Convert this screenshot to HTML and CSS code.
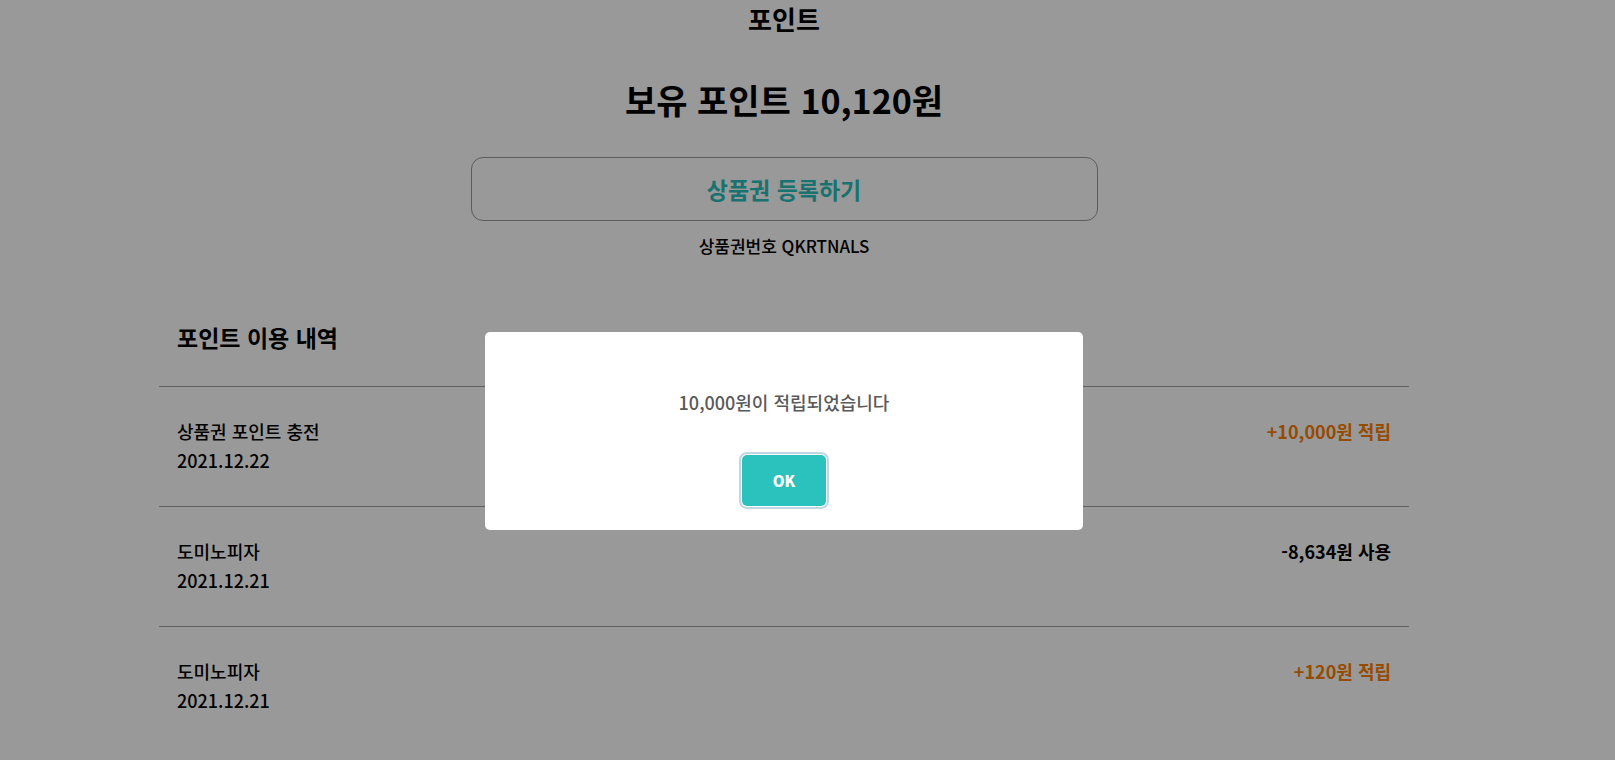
FILE: index.html
```html
<!DOCTYPE html>
<html lang="ko">
<head>
<meta charset="utf-8">
<title>포인트</title>
<link rel="stylesheet" href="styles.css">
</head>
<body>
<div class="frame">
  <main class="content">
    <h1 class="title">포인트</h1>
    <p class="balance">보유 포인트 10,120원</p>
    <button class="register">상품권 등록하기</button>
    <p class="code">상품권번호 QKRTNALS</p>

    <section class="history">
      <h2 class="history-title">포인트 이용 내역</h2>
      <ul class="list">
        <li class="row">
          <div class="info">
            <div class="name">상품권 포인트 충전</div>
            <div class="date">2021.12.22</div>
          </div>
          <div class="amount plus">+10,000원 적립</div>
        </li>
        <li class="row">
          <div class="info">
            <div class="name">도미노피자</div>
            <div class="date">2021.12.21</div>
          </div>
          <div class="amount">-8,634원 사용</div>
        </li>
        <li class="row">
          <div class="info">
            <div class="name">도미노피자</div>
            <div class="date">2021.12.21</div>
          </div>
          <div class="amount plus">+120원 적립</div>
        </li>
      </ul>
    </section>
  </main>
</div>

<div class="overlay">
  <div class="modal">
    <p class="modal-text">10,000원이 적립되었습니다</p>
    <div class="modal-footer">
      <button class="ok">OK</button>
    </div>
  </div>
</div>
</body>
</html>
```

FILE: styles.css
```css
* { box-sizing: border-box; }

html, body {
  margin: 0;
  padding: 0;
  background: #fff;
  overflow: hidden;
}

body {
  font-family: "Noto Sans CJK KR", "Noto Sans", sans-serif;
  color: #000;
}

.frame {
  width: 1568px;
}

.content {
  width: 1250px;
  margin: 0 auto;
  display: flex;
  flex-direction: column;
  align-items: center;
}

.title {
  margin: 0;
  padding-top: 6px;
  font-size: 26px;
  line-height: 26px;
  font-weight: 700;
}

.balance {
  margin: 48px 0 0;
  font-size: 34px;
  line-height: 40px;
  font-weight: 700;
}

.register {
  margin-top: 37px;
  width: 627px;
  height: 64px;
  border: 1px solid #999;
  border-radius: 12px;
  background: #fff;
  color: #2bbfba;
  font-family: inherit;
  font-size: 23px;
  font-weight: 700;
  padding: 0;
}

.code {
  margin: 13px 0 0;
  font-size: 17px;
  line-height: 24px;
  font-weight: 500;
}

.history {
  align-self: stretch;
  margin-top: 64px;
}

.history-title {
  margin: 0;
  padding: 0 18px;
  font-size: 23px;
  line-height: 30px;
  font-weight: 700;
}

.list {
  list-style: none;
  margin: 34px 0 0;
  padding: 0;
}

.row {
  display: flex;
  justify-content: space-between;
  align-items: flex-start;
  border-top: 1px solid #a0a0a0;
  padding: 30px 18px 31px;
  font-size: 18px;
  line-height: 29px;
  font-weight: 500;
}

.amount {
  font-weight: 600;
}

.amount.plus {
  color: #fa7d00;
}

/* modal */
.overlay {
  position: fixed;
  inset: 0;
  background: rgba(0, 0, 0, 0.4);
  display: flex;
  justify-content: center;
  align-items: flex-start;
  padding: 332px 47px 0 0;
}

.modal {
  width: 598px;
  height: 198px;
  background: #fff;
  border-radius: 5px;
  padding-top: 58px;
  display: flex;
  flex-direction: column;
  align-items: center;
}

.modal-text {
  margin: 0;
  font-size: 18px;
  line-height: 25px;
  font-weight: 500;
  color: #595959;
}

.modal-footer {
  margin-top: 40px;
}

.ok {
  width: 84px;
  height: 51px;
  border: none;
  border-radius: 5px;
  background: #2bc2bd;
  color: #fff;
  font-family: inherit;
  font-size: 15px;
  font-weight: 800;
  padding: 0;
  box-shadow: 0 0 0 1px #fff, 0 0 0 3px rgba(43, 114, 165, 0.29);
}
```
